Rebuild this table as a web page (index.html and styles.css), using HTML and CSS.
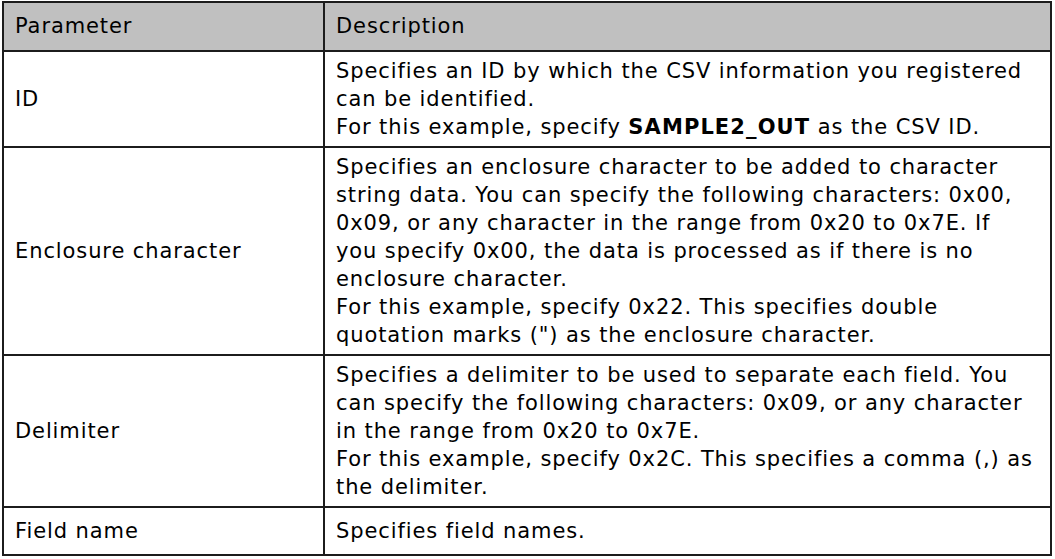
FILE: index.html
```html
<!DOCTYPE html>
<html>
<head>
<meta charset="utf-8">
<link rel="stylesheet" href="styles.css">
</head>
<body>
<table class="params">
  <colgroup>
    <col class="c1">
    <col class="c2">
  </colgroup>
  <thead>
    <tr class="head"><th>Parameter</th><th>Description</th></tr>
  </thead>
  <tbody>
    <tr>
      <td>ID</td>
      <td>Specifies an ID by which the CSV information you registered can be identified.<br>For this example, specify <b>SAMPLE2_OUT</b> as the CSV ID.</td>
    </tr>
    <tr>
      <td>Enclosure character</td>
      <td>Specifies an enclosure character to be added to character string data. You can specify the following characters: 0x00, 0x09, or any character in the range from 0x20 to 0x7E. If you specify 0x00, the data is processed as if there is no enclosure character.<br>For this example, specify 0x22. This specifies double quotation marks (") as the enclosure character.</td>
    </tr>
    <tr>
      <td>Delimiter</td>
      <td>Specifies a delimiter to be used to separate each field. You can specify the following characters: 0x09, or any character in the range from 0x20 to 0x7E.<br>For this example, specify 0x2C. This specifies a comma (,) as the delimiter.</td>
    </tr>
    <tr class="short">
      <td>Field name</td>
      <td>Specifies field names.</td>
    </tr>
  </tbody>
</table>
</body>
</html>
```
FILE: styles.css
```css
html, body {
  margin: 0;
  padding: 0;
  background: #ffffff;
}
body {
  padding: 1px 2px 0 2px;
  font-family: "DejaVu Sans", Verdana, sans-serif;
  font-size: 21px;
  letter-spacing: 0.9px;
  line-height: 28px;
  color: #000;
}
.params {
  border-collapse: collapse;
  width: 1050px;
  table-layout: fixed;
}
.c1 { width: 321px; }
.params th, .params td {
  border: 2px solid #1c1c1c;
  padding: 5px 14px 5px 11px;
  text-align: left;
  vertical-align: middle;
  font-weight: normal;
}
.params b { font-weight: bold; letter-spacing: 1.1px; }
.head th {
  background: #c0c0c0;
  height: 36px;
  padding-top: 5px;
  padding-bottom: 6px;
}
.short td {
  height: 36px;
}
```
